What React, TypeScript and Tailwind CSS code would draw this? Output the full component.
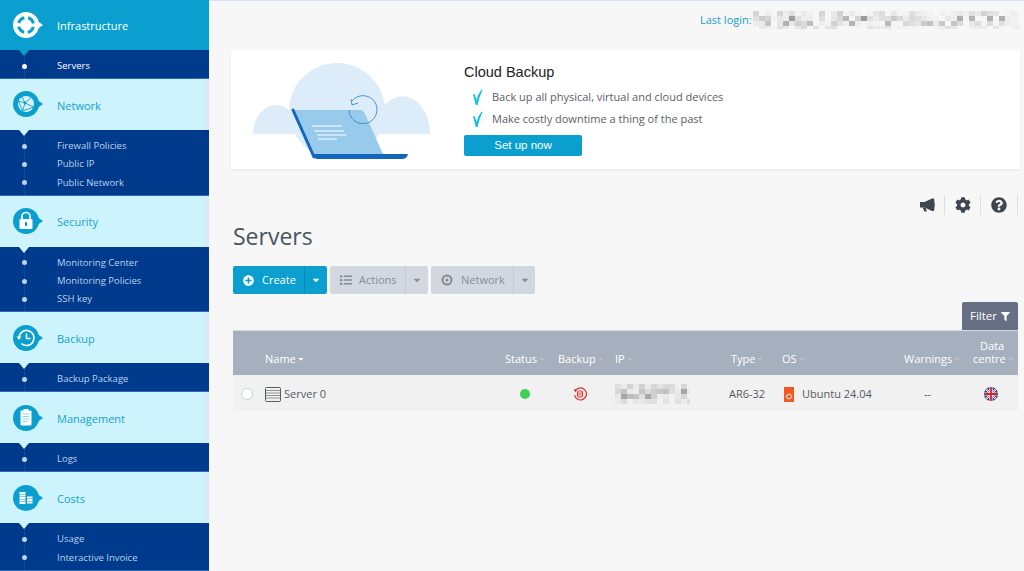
import type { ReactNode } from "react";
import { FaCog, FaQuestionCircle, FaPlusCircle, FaList, FaFilter, FaCaretDown } from "react-icons/fa";

const BLUE = "#0a9fce";

function Badge({ active, children }: { active?: boolean; children: ReactNode }) {
  const fill = active ? "#ffffff" : BLUE;
  return (
    <svg width="32" height="28" viewBox="0 0 32 28" className="shrink-0">
      <circle cx="13" cy="14" r="13" fill={fill} />
      <path d="M25 10.5 L30 14 L25 17.5 Z" fill={fill} />
      {children}
    </svg>
  );
}

const icons: Record<string, ReactNode> = {
  Infrastructure: (
    <Badge active>
      <circle cx="13" cy="14" r="7.5" fill="none" stroke={BLUE} strokeWidth="3" strokeDasharray="8 3.78" strokeDashoffset="-1.9" />
    </Badge>
  ),
  Network: (
    <Badge>
      <circle cx="13" cy="14" r="8" fill="#ffffff" opacity="0.85" />
      <path d="M5.5 11 L12 13 L18 7.5 M12 13 L9.5 21 M12 13 L20.5 17 M9 7 L12 13 M9.5 21 L20.5 17 M5.5 11 L9.5 21" stroke={BLUE} strokeWidth="0.9" fill="none" />
      <circle cx="12" cy="13" r="1.4" fill={BLUE} />
    </Badge>
  ),
  Security: (
    <Badge>
      <rect x="6.5" y="12" width="13" height="10" rx="1" fill="#ffffff" />
      <path d="M9 12 V9.5 a4 4 0 0 1 8 0 V12" fill="none" stroke="#ffffff" strokeWidth="1.6" />
      <rect x="12" y="15" width="2" height="4" fill={BLUE} />
    </Badge>
  ),
  Backup: (
    <Badge>
      <path d="M6 14 a7.5 7.5 0 1 1 2.4 5.5" fill="none" stroke="#ffffff" strokeWidth="1.7" />
      <path d="M3.5 12.5 L8.5 12.5 L6 16 Z" fill="#ffffff" />
      <path d="M13.5 9.5 V14.5 H17.5" fill="none" stroke="#ffffff" strokeWidth="1.5" />
    </Badge>
  ),
  Management: (
    <Badge>
      <rect x="7.5" y="6.5" width="11" height="15" rx="1" fill="#ffffff" />
      <rect x="10.5" y="5" width="5" height="2.5" fill="#ffffff" />
      <path d="M9.5 10 H16.5 M9.5 12.5 H16.5 M9.5 15 H16.5 M9.5 17.5 H14.5" stroke="#8fd3ea" strokeWidth="1.2" />
    </Badge>
  ),
  Costs: (
    <Badge>
      <path d="M6.5 9 H12.5 M6.5 11.5 H12.5 M6.5 14 H12.5 M6.5 16.5 H12.5 M6.5 19 H12.5" stroke="#ffffff" strokeWidth="1.9" />
      <path d="M14 13.5 H19.5 M14 16 H19.5 M14 18.5 H19.5" stroke="#ffffff" strokeWidth="1.9" />
    </Badge>
  ),
};

const MENU = [
  { name: "Infrastructure", active: true, items: ["Servers"] },
  { name: "Network", items: ["Firewall Policies", "Public IP", "Public Network"] },
  { name: "Security", items: ["Monitoring Center", "Monitoring Policies", "SSH key"] },
  { name: "Backup", items: ["Backup Package"] },
  { name: "Management", items: ["Logs"] },
  { name: "Costs", items: ["Usage", "Interactive Invoice"] },
];

function Sidebar() {
  return (
    <aside className="w-[209px] h-[571px] shrink-0 overflow-hidden bg-[#cdf3fc]">
      {MENU.map((section) => (
        <div key={section.name}>
          <div
            className={
              section.active
                ? "h-[50px] flex items-center pl-[13px] bg-[#0a9fce] text-white"
                : "h-[51px] flex items-center pl-[13px] bg-[#cdf3fc] border-r-[5px] border-[#d8eaf5] text-[#14a2d2]"
            }
          >
            <span className="w-[44px] flex">{icons[section.name]}</span>
            <span className="text-[11px] pt-[3px]">{section.name}</span>
          </div>
          <div className="relative bg-[#003a8c] pt-[7px] pb-[2.67px] border-b border-[#2c6cb4]">
            <div className="absolute left-[24px] top-0 bottom-0 w-px bg-[#0f4a9a]" />
            <div
              className={
                section.active
                  ? "absolute left-[19px] top-0 w-0 h-0 border-x-[5.5px] border-x-transparent border-t-[6px] border-t-[#0a9fce]"
                  : "absolute left-[19px] top-0 w-0 h-0 border-x-[5.5px] border-x-transparent border-t-[6px] border-t-[#cdf3fc]"
              }
            />
            {section.items.map((item) => (
              <div key={item} className="relative h-[18.33px] flex items-center pl-[57px]">
                <span
                  className={
                    section.active
                      ? "absolute left-[22px] w-[5px] h-[5px] rounded-full bg-white"
                      : "absolute left-[22px] w-[5px] h-[5px] rounded-full bg-[#b9d3ec]"
                  }
                />
                <span className={section.active ? "text-[9.5px] text-white" : "text-[9.5px] text-[#b9d3ec]"}>{item}</span>
              </div>
            ))}
          </div>
        </div>
      ))}
    </aside>
  );
}

// pixelated grey blocks standing in for the blurred values
function Mosaic({ width, height, seed }: { width: number; height: number; seed: number }) {
  const cells = [];
  for (let y = 0; y < height; y += 5) {
    for (let x = 0; x < width; x += 6) {
      const h = Math.sin(x * 12.9898 + y * 78.233 + seed) * 43758.5453;
      const n = h - Math.floor(h);
      const mid = 1 - Math.abs(y + 2.5 - height / 2) / (height / 2);
      cells.push(<rect key={`${x}-${y}`} x={x} y={y} width="6" height="5" fill="#8d8d8d" opacity={n * n * 0.75 * (0.3 + mid)} />);
    }
  }
  return (
    <svg width={width} height={height} className="shrink-0 blur-[0.6px]">
      {cells}
    </svg>
  );
}

function Illustration() {
  return (
    <svg width="200" height="110" viewBox="231 55 200 110" className="shrink-0">
      <circle cx="337" cy="111" r="48" fill="#dcecf8" />
      <path d="M253 134 a23 29 0 0 1 46 0 Z" fill="#dcecf8" />
      <path d="M375 134 a27 37 0 0 1 55 0 Z" fill="#dcecf8" />
      <rect x="276" y="120" width="130" height="14" fill="#dcecf8" />
      <path d="M293 110 H360 Q363 110 365 114 L383 154 H314 Z" fill="#98cbeb" />
      <path d="M293 110 L314 157" stroke="#1466bb" strokeWidth="3" strokeLinecap="round" />
      <path d="M313 154 H408 Q407 159 402 159 H316 Z" fill="#1466bb" />
      <path d="M312 126 H342 M314 131 H344 M317 135 H346 M318 139 H337" stroke="#ffffff" strokeWidth="1" />
      <path d="M352 101 A14 14 0 1 1 349 110" fill="none" stroke="#3b87c8" strokeWidth="0.9" />
      <path d="M351 99 L352 105 L358 103" fill="none" stroke="#3b87c8" strokeWidth="0.9" />
    </svg>
  );
}

function Check() {
  return (
    <svg width="13" height="17" viewBox="0 0 13 17" className="shrink-0">
      <path d="M2 5.5 L3.6 5 L5.5 11 Q6.5 6 10.5 0.5 L11.5 1 Q8 8 6.6 16 L4.8 16 Z" fill="#14bfe6" />
    </svg>
  );
}

function Banner() {
  return (
    <section className="ml-[22px] w-[789px] h-[119px] bg-white shadow-[0_1px_2px_rgba(0,0,0,0.08)] flex">
      <div className="w-[233px] pt-[5px]">
        <Illustration />
      </div>
      <div className="pt-[13px]">
        <h2 className="font-['Liberation_Sans',sans-serif] text-[14.5px] leading-[18px] text-[#222222]">Cloud Backup</h2>
        <ul className="mt-[5px] text-[11px] text-[#5c6066]">
          <li className="h-[22px] flex items-center gap-[8px] pl-[7px]">
            <Check />
            Back up all physical, virtual and cloud devices
          </li>
          <li className="h-[22px] flex items-center gap-[8px] pl-[7px]">
            <Check />
            Make costly downtime a thing of the past
          </li>
        </ul>
        <button className="mt-[5px] w-[118px] h-[21px] rounded-[2px] bg-[#0a9fce] text-white text-[11.5px] font-['Liberation_Sans',sans-serif]">
          Set up now
        </button>
      </div>
    </section>
  );
}

function Megaphone() {
  return (
    <svg width="17" height="14" viewBox="0 0 17 14">
      <path d="M1 4 H5.5 L13 0.5 H15 Q16.5 6.5 15 13 H13 L5.5 9.5 H1 Z" fill="#3f4650" />
      <path d="M3.5 9.5 H6.5 L8 13.5 H5.5 Z" fill="#3f4650" />
    </svg>
  );
}

function Toolbar() {
  return (
    <div className="mt-[24px] h-[24px] flex justify-end items-center pr-[6px] text-[#3f4650]">
      <span className="w-[35px] h-[20px] flex items-center justify-center border-r border-[#d9dfe8]">
        <Megaphone />
      </span>
      <span className="w-[36px] h-[20px] flex items-center justify-center border-r border-[#d9dfe8]">
        <FaCog size={16} />
      </span>
      <span className="w-[37px] h-[20px] flex items-center justify-center border-r border-[#d9dfe8]">
        <FaQuestionCircle size={16} />
      </span>
    </div>
  );
}

function NetworkGlyph() {
  return (
    <svg width="12" height="12" viewBox="0 0 12 12">
      <circle cx="6" cy="6" r="4.5" fill="none" stroke="#868b92" strokeWidth="2" />
      <circle cx="6" cy="6" r="1.5" fill="#868b92" />
    </svg>
  );
}

function Actions() {
  return (
    <div className="mt-[13px] ml-[24px] flex gap-[3px] text-[11px]">
      <div className="h-[28px] w-[94px] flex rounded-[2px] bg-[#0a9fce] text-white">
        <span className="w-[72px] flex items-center gap-[8px] pl-[10px] border-r border-[#0a88b4]">
          <FaPlusCircle size={11} />
          Create
        </span>
        <span className="flex-1 flex items-center justify-center">
          <FaCaretDown size={10} />
        </span>
      </div>
      <div className="h-[28px] w-[98px] flex rounded-[2px] bg-[#d3d8e0] text-[#878c93]">
        <span className="w-[76px] flex items-center gap-[7px] pl-[10px] border-r border-[#c3c8d1]">
          <FaList size={12} />
          Actions
        </span>
        <span className="flex-1 flex items-center justify-center">
          <FaCaretDown size={10} />
        </span>
      </div>
      <div className="h-[28px] w-[104px] flex rounded-[2px] bg-[#d3d8e0] text-[#878c93]">
        <span className="w-[83px] flex items-center gap-[8px] pl-[10px] border-r border-[#c3c8d1]">
          <NetworkGlyph />
          Network
        </span>
        <span className="flex-1 flex items-center justify-center">
          <FaCaretDown size={10} />
        </span>
      </div>
    </div>
  );
}

function Head({ children, on }: { children: ReactNode; on?: boolean }) {
  return (
    <span className="inline-flex items-center gap-px">
      {children}
      <FaCaretDown size={8} className={on ? "text-white" : "text-[#b9c0cb]"} />
    </span>
  );
}

function RowStatusBackup() {
  return (
    <svg width="14" height="14" viewBox="0 0 14 14">
      <path d="M2.5 3.5 A6 6 0 1 1 1.5 8" fill="none" stroke="#e0322c" strokeWidth="1.2" />
      <path d="M0.5 2 L4 2.5 L2.5 5.5 Z" fill="#e0322c" />
      <rect x="4.5" y="4" width="5" height="6" rx="0.8" fill="none" stroke="#e0322c" strokeWidth="1" />
      <path d="M4.5 6 H9.5 M4.5 8 H9.5" stroke="#e0322c" strokeWidth="0.8" />
    </svg>
  );
}

function ServerGlyph() {
  return (
    <svg width="16" height="15" viewBox="0 0 16 15">
      <rect x="0.5" y="0.5" width="15" height="14" rx="1" fill="none" stroke="#555b63" />
      <path d="M1 3.5 H15 M1 6 H15 M1 8.5 H15 M1 11 H15" stroke="#777c84" strokeWidth="0.8" />
    </svg>
  );
}

function UbuntuGlyph() {
  return (
    <svg width="10" height="15" viewBox="0 0 10 15">
      <rect width="10" height="15" fill="#f0591f" />
      <circle cx="5" cy="9.5" r="2.4" fill="none" stroke="#ffffff" strokeWidth="0.9" />
      <circle cx="2.4" cy="9.5" r="0.7" fill="#ffffff" />
    </svg>
  );
}

function UkFlag() {
  return (
    <svg width="14" height="14" viewBox="0 0 14 14">
      <clipPath id="uk">
        <circle cx="7" cy="7" r="7" />
      </clipPath>
      <g clipPath="url(#uk)">
        <rect width="14" height="14" fill="#1f3f8f" />
        <path d="M0 0 L14 14 M14 0 L0 14" stroke="#ffffff" strokeWidth="2" />
        <path d="M0 0 L14 14 M14 0 L0 14" stroke="#d2232f" strokeWidth="0.8" />
        <path d="M7 0 V14 M0 7 H14" stroke="#ffffff" strokeWidth="3.2" />
        <path d="M7 0 V14 M0 7 H14" stroke="#d2232f" strokeWidth="1.8" />
      </g>
    </svg>
  );
}

function ServerTable() {
  const cols = "grid grid-cols-[32px_240px_53px_57px_116px_51px_122px_69px_45px]";
  return (
    <div className="ml-[24px] mr-[6px]">
      <div className={`${cols} h-[45px] items-end pb-[10px] bg-[#a6afbd] text-white text-[11px] leading-[13px] border-t border-[#d5d9e0]`}>
        <span />
        <span><Head on>Name</Head></span>
        <span><Head>Status</Head></span>
        <span><Head>Backup</Head></span>
        <span><Head>IP</Head></span>
        <span><Head>Type</Head></span>
        <span><Head>OS</Head></span>
        <span className="whitespace-nowrap"><Head>Warnings</Head></span>
        <span className="text-center pr-[7px] whitespace-nowrap">
          Data
          <br />
          <Head>centre</Head>
        </span>
      </div>
      <div className={`${cols} h-[36px] pt-[2px] items-center bg-[#f1f1f1] text-[11px] text-[#555a61]`}>
        <span className="pl-[8px]">
          <span className="block w-[12px] h-[12px] rounded-full bg-white border-[1.5px] border-[#c9d0dc]" />
        </span>
        <span className="flex items-center gap-[3px]">
          <ServerGlyph />
          Server 0
        </span>
        <span className="pl-[15px]">
          <span className="block w-[10px] h-[10px] rounded-full bg-[#3fcf55]" />
        </span>
        <span className="pl-[15px] flex">
          <RowStatusBackup />
        </span>
        <span className="flex">
          <Mosaic width={75} height={20} seed={17} />
        </span>
        <span className="-ml-[2px]">AR6-32</span>
        <span className="flex items-center gap-[8px] pl-[2px]">
          <UbuntuGlyph />
          Ubuntu 24.04
        </span>
        <span className="pl-[20px]">--</span>
        <span className="flex justify-center pr-[9px]">
          <UkFlag />
        </span>
      </div>
    </div>
  );
}

export default function App() {
  return (
    <div className="w-[1024px] h-[571px] overflow-hidden flex bg-[#f7f7f7] font-['Open_Sans',sans-serif]">
      <Sidebar />
      <main className="w-[815px] shrink-0 border-t border-[#d9e2f0]">
        <div className="h-[49px] pt-[10px] pl-[491px] flex items-start">
          <span className="text-[11px] leading-[18px] text-[#1a9ccb] whitespace-nowrap">Last login:</span>
          <span className="ml-[1px] flex">
            <Mosaic width={266} height={18} seed={5} />
          </span>
        </div>
        <Banner />
        <Toolbar />
        <h1 className="mt-[3px] ml-[24px] h-[33px] text-[23px] leading-[32px] text-[#4a5560]">Servers</h1>
        <Actions />
        <div className="mt-[8px] mr-[6px] flex justify-end">
          <span className="w-[56px] h-[28px] rounded-t-[2px] bg-[#666f84] text-white text-[11.5px] flex items-center justify-center gap-[4px]">
            Filter
            <FaFilter size={9} />
          </span>
        </div>
        <ServerTable />
      </main>
    </div>
  );
}
